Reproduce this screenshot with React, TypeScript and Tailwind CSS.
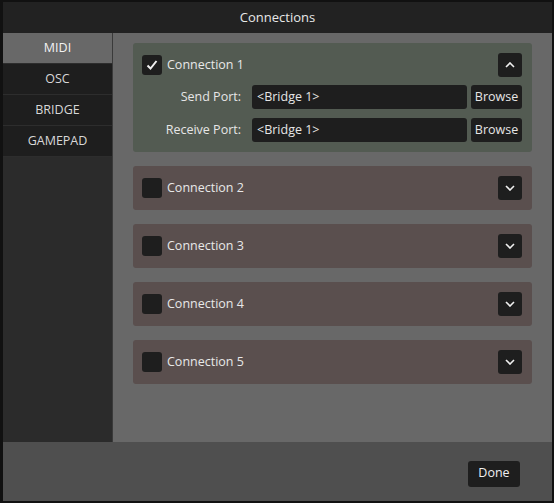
import React from "react";

const font = { fontFamily: '"Open Sans", "DejaVu Sans", sans-serif' };

function Check({ checked }: { checked: boolean }) {
  return (
    <div className="w-[20px] h-[20px] rounded-[3px] bg-[#1e1e1e] flex items-center justify-center">
      {checked && (
        <svg width="12" height="12" viewBox="0 0 12 12">
          <path d="M1.5 6.5 L4.5 9.5 L10.5 2" stroke="#f0f0f0" strokeWidth="2" fill="none" />
        </svg>
      )}
    </div>
  );
}

function Chevron({ up }: { up: boolean }) {
  return (
    <div className="w-[24px] h-[24px] rounded-[3px] bg-[#1e1e1e] flex items-center justify-center">
      <svg width="10" height="6" viewBox="0 0 10 6">
        <path d={up ? "M1 5 L5 1 L9 5" : "M1 1 L5 5 L9 1"} stroke="#f0f0f0" strokeWidth="1.6" fill="none" />
      </svg>
    </div>
  );
}

function PortRow({ label }: { label: string }) {
  return (
    <div className="flex items-center h-[24px]">
      <div className="w-[110px] text-right text-[12.5px] text-[#e6e6e6] pr-[11px]">{label}</div>
      <div className="w-[215px] h-[24px] rounded-[3px] bg-[#1e1e1e] flex items-center pl-[5px] text-[12.5px] text-[#e6e6e6]">
        &lt;Bridge 1&gt;
      </div>
      <div className="ml-[4px] w-[51px] h-[24px] rounded-[3px] bg-[#1e1e1e] flex items-center justify-center text-[12.5px] text-[#e6e6e6]">
        Browse
      </div>
    </div>
  );
}

export default function App() {
  const tabs = ["MIDI", "OSC", "BRIDGE", "GAMEPAD"];
  return (
    <div style={font} className="w-[554px] h-[503px] bg-[#111] pl-[3px] pr-[2px] pt-[2px] pb-[2px] flex flex-col">
      <div className="h-[31px] bg-[#222] flex items-center justify-center text-[13px] text-[#e8e8e8] shrink-0">
        Connections
      </div>
      <div className="flex flex-1 min-h-0">
        <div className="w-[110px] bg-[#2b2b2b] border-r border-[#3a3a3a] flex flex-col">
          {tabs.map((t, i) => (
            <div
              key={t}
              className={`h-[31px] flex items-center justify-center text-[12.5px] border-b border-[#2d2d2d] ${
                i === 0 ? "bg-[#686868] text-[#f2f2f2]" : "bg-[#1e1e1e] text-[#d8d8d8]"
              }`}
            >
              {t}
            </div>
          ))}
        </div>
        <div className="flex-1 bg-[#686868] pt-[10px] pl-[20px] pr-[20px] flex flex-col gap-[14px]">
          <div className="bg-[#535b52] rounded-[3px] h-[109px] pl-[9px] pr-[10px] pt-[10px] flex flex-col">
            <div className="flex items-center h-[24px]">
              <Check checked />
              <span className="ml-[5px] text-[12.5px] text-[#e8e8e8]">Connection 1</span>
              <div className="ml-auto">
                <Chevron up />
              </div>
            </div>
            <div className="mt-[8px] flex flex-col gap-[9px]">
              <PortRow label="Send Port:" />
              <PortRow label="Receive Port:" />
            </div>
          </div>
          {[2, 3, 4, 5].map((n) => (
            <div key={n} className="bg-[#5a4f4e] rounded-[3px] h-[44px] pl-[9px] pr-[10px] flex items-center">
              <Check checked={false} />
              <span className="ml-[5px] text-[12.5px] text-[#e8e8e8]">Connection {n}</span>
              <div className="ml-auto">
                <Chevron up={false} />
              </div>
            </div>
          ))}
        </div>
      </div>
      <div className="h-[59px] bg-[#4f4f4f] flex items-center justify-end pr-[32px] shrink-0">
        <div className="w-[52px] h-[26px] rounded-[3px] bg-[#1e1e1e] flex items-center justify-center text-[12.5px] text-[#f0f0f0] mt-[4px]">
          Done
        </div>
      </div>
    </div>
  );
}
